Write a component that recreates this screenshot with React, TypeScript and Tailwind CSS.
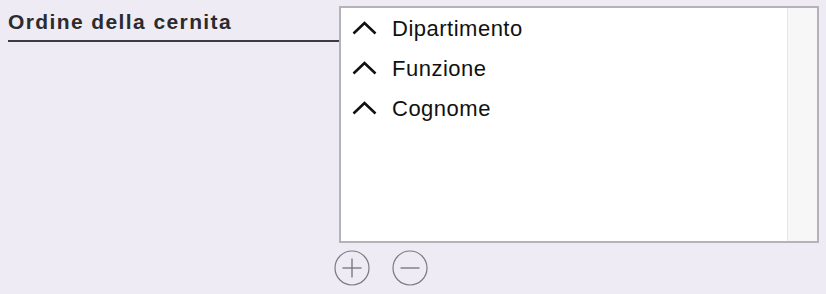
const fields = ['Dipartimento', 'Funzione', 'Cognome'];

function Chevron() {
  return (
    <svg width="25" height="14" viewBox="0 0 25 14" fill="none" className="shrink-0">
      <path d="M1.5 12.5L12.5 2L23.5 12.5" stroke="#111" strokeWidth="2.6" />
    </svg>
  );
}

function CircleButton({ kind }: { kind: 'plus' | 'minus' }) {
  return (
    <button type="button" className="w-[36px] h-[36px] flex items-center justify-center">
      <svg width="36" height="36" viewBox="0 0 36 36" fill="none">
        <circle cx="18" cy="18" r="17" stroke="#7a7a7e" strokeWidth="1.2" />
        <path d="M8.5 18h19" stroke="#7a7a7e" strokeWidth="1.4" />
        {kind === 'plus' && <path d="M18 8.5v19" stroke="#7a7a7e" strokeWidth="1.4" />}
      </svg>
    </button>
  );
}

export default function App() {
  return (
    <div className="w-[826px] h-[294px] bg-[#eeebf5] font-['Liberation_Sans',Arial,sans-serif] overflow-hidden">
      <div className="flex pt-[6px]">
        {/* Label */}
        <div className="ml-2 w-[331px] h-[36px] border-b-2 border-[#3c3c3e] pt-[4px]">
          <span className="text-[21px] leading-[24px] font-bold tracking-[1.4px] text-[#2b2b2d]">Ordine della cernita</span>
        </div>

        {/* Sort list */}
        <div className="w-[480px] h-[237px] border-2 border-[#b4b3b9] bg-white flex">
          <div className="flex-1">
            {fields.map((f) => (
              <div key={f} className="h-[40px] flex items-center pl-[11px]">
                <Chevron />
                <span className="ml-[15px] text-[22px] tracking-[0.5px] text-[#111]">{f}</span>
              </div>
            ))}
          </div>
          <div className="w-[30px] bg-[#f7f7f7] border-l border-[#e6e6e8]" />
        </div>
      </div>

      <div className="flex gap-[22px] ml-[334px] mt-[7px]">
        <CircleButton kind="plus" />
        <CircleButton kind="minus" />
      </div>
    </div>
  );
}
